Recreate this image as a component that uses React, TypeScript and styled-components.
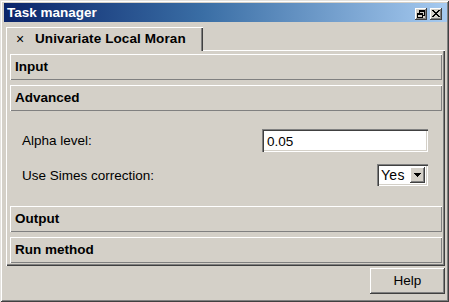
import React from 'react';
import styled, { createGlobalStyle } from 'styled-components';

const Global = createGlobalStyle`
  html, body { margin: 0; padding: 0; background: #d4d0c8; }
  body { font-family: "Liberation Sans", Arial, sans-serif; font-size: 13.5px; color: #000; }
  * { box-sizing: border-box; }
`;

const Window = styled.div`
  width: 449px;
  height: 302px;
  background: #d4d0c8;
  box-shadow: inset 1px 1px #e4e2de, inset -1px -1px #404040, inset 2px 2px #fff, inset -2px -2px #808080;
  padding: 3px 2px 3px 4px;
  display: flex;
  flex-direction: column;
`;

const TitleBar = styled.div`
  height: 19px;
  flex: none;
  background: linear-gradient(to right, #0a246a 0%, #3a6ea5 45%, #a6caf0 100%);
  display: flex;
  align-items: flex-start;
  padding: 0 5px 0 3px;
`;

const TitleText = styled.div`
  flex: 1;
  color: #fff;
  font-weight: bold;
  font-size: 13.5px;
  line-height: 19px;
  white-space: nowrap;
`;

const TitleButtons = styled.div`
  display: flex;
  gap: 3px;
  margin-top: 5px;
`;

const TitleButton = styled.div`
  width: 12px;
  height: 12px;
  background: #d4d0c8;
  box-shadow: inset -1px -1px #404040, inset 1px 1px #fff, inset -2px -2px #808080;
  display: flex;
  align-items: center;
  justify-content: center;
  padding: 0 1px 1px 0;
`;

const TabStrip = styled.div`
  display: flex;
  margin-top: 5px;
  padding-left: 2px;
  flex: none;
`;

const Tab = styled.div`
  position: relative;
  z-index: 1;
  width: 197px;
  height: 24px;
  margin-bottom: -1px;
  background: #d4d0c8;
  box-shadow: inset 1px 1px #fff, inset -1px 0 #404040, inset -2px 0 #808080;
  display: flex;
  align-items: center;
  padding: 0 0 1px 10px;
  white-space: nowrap;
`;

const TabClose = styled.span`
  font-size: 14px;
  width: 19px;
  line-height: 1;
`;

const TabLabel = styled.span`
  font-weight: bold;
  font-size: 13.5px;
  letter-spacing: 0.1px;
`;

const Panel = styled.div`
  margin: 0 2px 0 2px;
  height: 216px;
  flex: none;
  box-shadow: inset 1px 1px #fff, inset -1px -1px #404040, inset -2px -2px #808080;
  padding: 4px 3px 3px 4px;
  display: flex;
  flex-direction: column;
  gap: 5px;
`;

const Section = styled.div`
  display: flex;
  flex-direction: column;
`;

const SectionBar = styled.div`
  height: 26px;
  box-shadow: inset 1px 1px #fff, inset -1px -1px #808080;
  display: flex;
  align-items: center;
  padding: 0 0 1px 5px;
  font-weight: bold;
  font-size: 13.5px;
`;

const SectionBody = styled.div`
  height: 90px;
  padding: 18px 14px 15px 12px;
  display: flex;
  flex-direction: column;
  gap: 12px;
`;

const FieldRow = styled.div<{ $h: number }>`
  height: ${(p) => p.$h}px;
  display: flex;
  align-items: center;
  justify-content: space-between;
`;

const Label = styled.span`
  font-size: 13.5px;
`;

const sunken = `
  background: #fff;
  box-shadow: inset 1px 1px #808080, inset 2px 2px #404040, inset -1px -1px #fff, inset -2px -2px #d4d0c8;
`;

const TextField = styled.div`
  ${sunken}
  width: 166px;
  height: 23px;
  display: flex;
  align-items: center;
  padding: 1px 0 0 5px;
  font-size: 13.5px;
`;

const Select = styled.div`
  ${sunken}
  width: 51px;
  height: 22px;
  display: flex;
  align-items: center;
  justify-content: space-between;
  padding: 2px 3px 2px 4px;
  font-size: 14px;
  letter-spacing: 0.3px;
`;

const DropButton = styled.div`
  width: 15px;
  height: 16px;
  background: #d4d0c8;
  box-shadow: inset -1px -1px #404040, inset 1px 1px #fff, inset -2px -2px #808080;
  display: flex;
  align-items: center;
  justify-content: center;
  padding: 0 1px 1px 0;
`;

const Footer = styled.div`
  display: flex;
  justify-content: flex-end;
  padding: 2px 2px 0 0;
`;

const Button = styled.div`
  width: 75px;
  height: 26px;
  background: #d4d0c8;
  box-shadow: inset -1px -1px #404040, inset 1px 1px #fff, inset -2px -2px #808080;
  display: flex;
  align-items: center;
  justify-content: center;
  font-size: 13.5px;
  padding-bottom: 1px;
`;

const RestoreIcon = () => (
  <svg width="8" height="8" viewBox="0 0 8 8" shapeRendering="crispEdges">
    <path d="M2 0h6v2H2z M7 2h1v4H7z M6 5h1v1H6z M2 2h1v1H2z" fill="#000" />
    <path d="M0 3h6v2H0z M0 5h1v3H0z M5 5h1v3H5z M0 7h6v1H0z" fill="#000" />
  </svg>
);

const CloseIcon = () => (
  <svg width="8" height="7" viewBox="0 0 8 7" shapeRendering="crispEdges">
    <path
      d="M0 0h2v1H0z M6 0h2v1H6z M1 1h2v1H1z M5 1h2v1H5z M2 2h4v1H2z M3 3h2v1H3z M2 4h4v1H2z M1 5h2v1H1z M5 5h2v1H5z M0 6h2v1H0z M6 6h2v1H6z"
      fill="#000"
    />
  </svg>
);

const ArrowDown = () => (
  <svg width="7" height="4" viewBox="0 0 7 4" shapeRendering="crispEdges">
    <path d="M0 0h7v1H0z M1 1h5v1H1z M2 2h3v1H2z M3 3h1v1H3z" fill="#000" />
  </svg>
);

export default function App() {
  return (
    <>
      <Global />
      <Window>
        <TitleBar>
          <TitleText>Task manager</TitleText>
          <TitleButtons>
            <TitleButton>
              <RestoreIcon />
            </TitleButton>
            <TitleButton>
              <CloseIcon />
            </TitleButton>
          </TitleButtons>
        </TitleBar>
        <TabStrip>
          <Tab>
            <TabClose>×</TabClose>
            <TabLabel>Univariate Local Moran</TabLabel>
          </Tab>
        </TabStrip>
        <Panel>
          <SectionBar>Input</SectionBar>
          <Section>
            <SectionBar>Advanced</SectionBar>
            <SectionBody>
              <FieldRow $h={23}>
                <Label>Alpha level:</Label>
                <TextField>0.05</TextField>
              </FieldRow>
              <FieldRow $h={22}>
                <Label>Use Simes correction:</Label>
                <Select>
                  <span>Yes</span>
                  <DropButton>
                    <ArrowDown />
                  </DropButton>
                </Select>
              </FieldRow>
            </SectionBody>
          </Section>
          <SectionBar>Output</SectionBar>
          <SectionBar>Run method</SectionBar>
        </Panel>
        <Footer>
          <Button>Help</Button>
        </Footer>
      </Window>
    </>
  );
}
